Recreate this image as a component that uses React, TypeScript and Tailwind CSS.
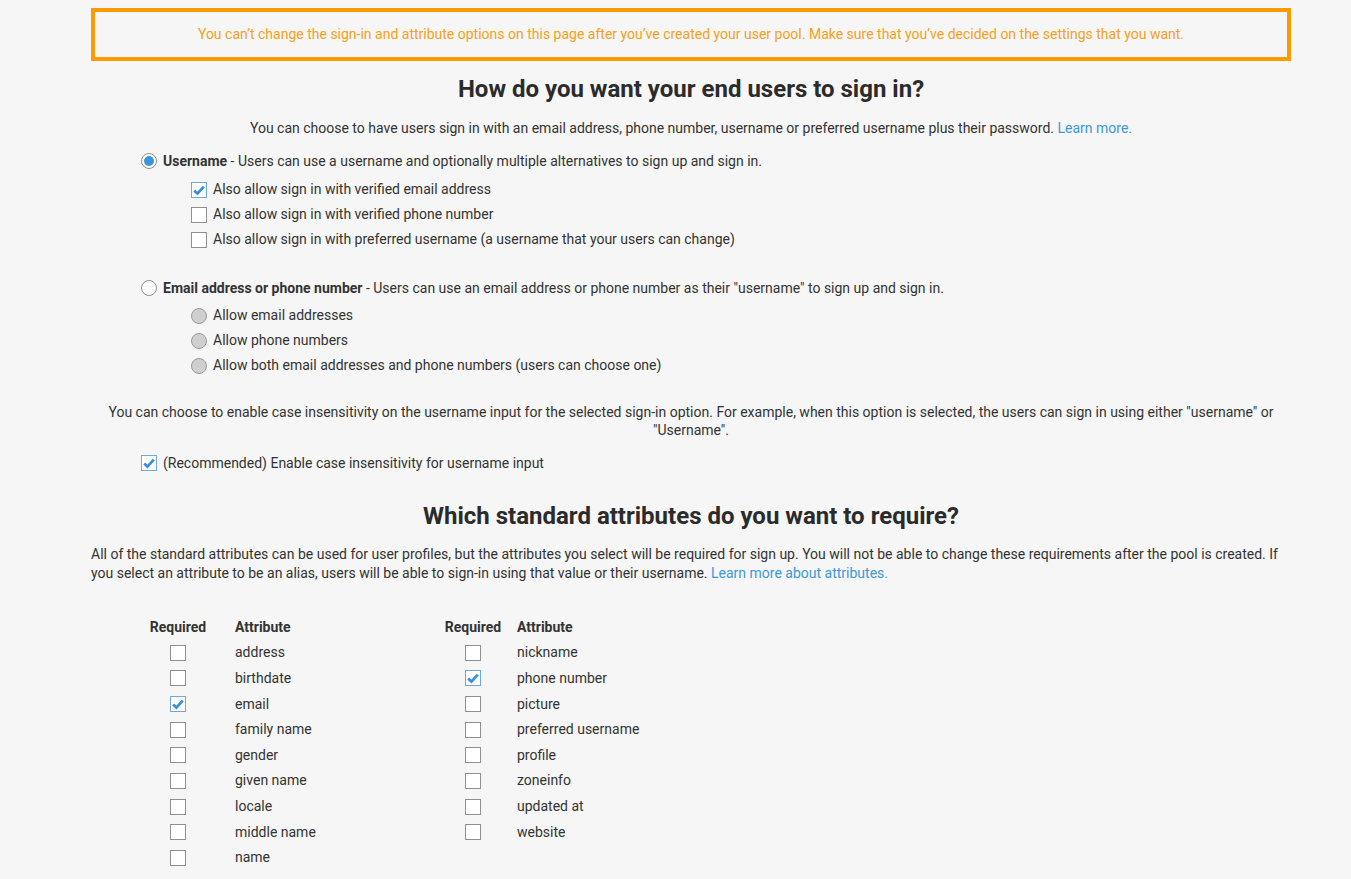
import React from "react";

function Check({ checked }: { checked?: boolean }) {
  return (
    <span
      className={
        "inline-flex h-[16px] w-[16px] shrink-0 items-center justify-center border bg-white " +
        (checked ? "border-[#6fa8dc]" : "border-[#8f8f8f]")
      }
    >
      {checked && (
        <svg width="14" height="14" viewBox="0 0 14 14">
          <path d="M2.2 7.6 L5.4 10.6 L11.8 3.6" fill="none" stroke="#3a8fdc" strokeWidth="2.8" strokeLinecap="butt" strokeLinejoin="miter" />
        </svg>
      )}
    </span>
  );
}

function Radio({ state }: { state: "on" | "off" | "disabled" }) {
  if (state === "disabled")
    return <span className="inline-block h-[16px] w-[16px] shrink-0 rounded-full border border-[#9a9a9a] bg-[#cfcfcf]" />;
  return (
    <span className="inline-flex h-[16px] w-[16px] shrink-0 items-center justify-center rounded-full border border-[#8f8f8f] bg-white">
      {state === "on" && <span className="h-[10px] w-[10px] rounded-full bg-[#3b95db]" />}
    </span>
  );
}

const left: [string, boolean][] = [
  ["address", false],
  ["birthdate", false],
  ["email", true],
  ["family name", false],
  ["gender", false],
  ["given name", false],
  ["locale", false],
  ["middle name", false],
  ["name", false],
];
const right: [string, boolean][] = [
  ["nickname", false],
  ["phone number", true],
  ["picture", false],
  ["preferred username", false],
  ["profile", false],
  ["zoneinfo", false],
  ["updated at", false],
  ["website", false],
];

function AttrTable({ rows, attrPad, width }: { rows: [string, boolean][]; attrPad: string; width: string }) {
  return (
    <div className={width}>
      <div className="flex h-[25px] items-center font-bold text-[#333]">
        <div className="w-[74px] text-center">Required</div>
        <div className={attrPad}>Attribute</div>
      </div>
      {rows.map(([n, c]) => (
        <div key={n} className="flex h-[25.625px] items-center">
          <div className="flex w-[74px] justify-center">
            <Check checked={c} />
          </div>
          <div className={attrPad}>{n}</div>
        </div>
      ))}
    </div>
  );
}

export default function App() {
  return (
    <div className="min-h-[879px] w-full bg-[#f5f6f5] pt-[8px] text-[14px] text-[#333] [font-family:Roboto,'Liberation_Sans',sans-serif]">
      <div className="ml-[91px] w-[1200px]">
        <div className="flex h-[53px] items-center justify-center border-4 border-[#ff9900] text-[#f7a020]">
          You can’t change the sign-in and attribute options on this page after you’ve created your user pool. Make sure that you’ve decided on the settings that you want.
        </div>

        <h1 className="mt-[14px] text-center text-[24px] font-bold leading-[28px] text-[#2b2b2b]">
          How do you want your end users to sign in?
        </h1>
        <p className="mt-[15px] text-center leading-[20px]">
          You can choose to have users sign in with an email address, phone number, username or preferred username plus their password.{" "}
          <span className="text-[#3b99d8]">Learn more.</span>
        </p>

        <div className="mt-[13px] pl-[50px]">
          <div className="flex h-[20px] items-center gap-[6px]">
            <Radio state="on" />
            <span>
              <b>Username</b> - Users can use a username and optionally multiple alternatives to sign up and sign in.
            </span>
          </div>
          <div className="mt-[6px] pl-[50px]">
            {[
              ["Also allow sign in with verified email address", true],
              ["Also allow sign in with verified phone number", false],
              ["Also allow sign in with preferred username (a username that your users can change)", false],
            ].map(([t, c]) => (
              <div key={t as string} className="flex h-[25px] items-center gap-[6px]">
                <Check checked={c as boolean} />
                <span>{t}</span>
              </div>
            ))}
          </div>

          <div className="mt-[26px] flex h-[20px] items-center gap-[6px]">
            <Radio state="off" />
            <span>
              <b>Email address or phone number</b> - Users can use an email address or phone number as their "username" to sign up and sign in.
            </span>
          </div>
          <div className="mt-[5px] pl-[50px]">
            {[
              "Allow email addresses",
              "Allow phone numbers",
              "Allow both email addresses and phone numbers (users can choose one)",
            ].map((t) => (
              <div key={t} className="flex h-[25px] items-center gap-[6px]">
                <Radio state="disabled" />
                <span>{t}</span>
              </div>
            ))}
          </div>
        </div>

        <p className="mx-auto mt-[25px] w-[1180px] text-center leading-[18px]">
          You can choose to enable case insensitivity on the username input for the selected sign-in option. For example, when this option is selected, the users can sign in using either "username" or "Username".
        </p>
        <div className="mt-[14px] flex h-[20px] items-center gap-[6px] pl-[50px]">
          <Check checked />
          <span>(Recommended) Enable case insensitivity for username input</span>
        </div>

        <h2 className="mt-[29px] text-center text-[24px] font-bold leading-[28px] text-[#2b2b2b]">
          Which standard attributes do you want to require?
        </h2>
        <p className="mt-[15px] leading-[19px]">
          All of the standard attributes can be used for user profiles, but the attributes you select will be required for sign up. You will not be able to change these requirements after the pool is created. If you select an attribute to be an alias, users will be able to sign-in using that value or their username.{" "}
          <span className="text-[#3b99d8]">Learn more about attributes.</span>
        </p>

        <div className="mt-[32px] flex pl-[50px]">
          <AttrTable rows={left} attrPad="pl-[20px]" width="w-[295px]" />
          <AttrTable rows={right} attrPad="pl-[7px]" width="w-[300px]" />
        </div>
        <div className="h-[20px]" />
      </div>
    </div>
  );
}
